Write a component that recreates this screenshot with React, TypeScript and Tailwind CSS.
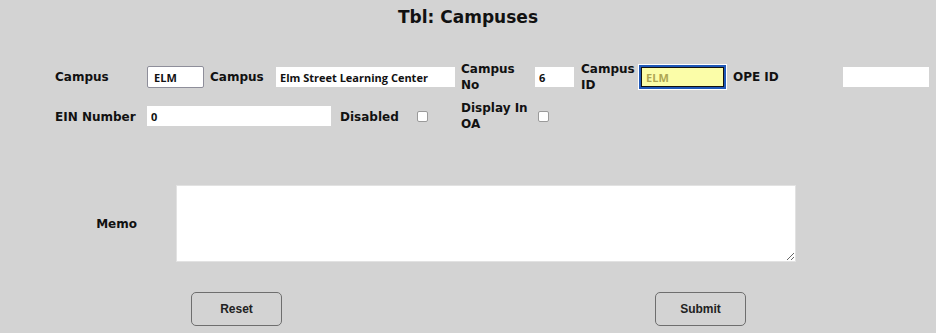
export default function App() {
  const label = "font-['DejaVu_Sans',sans-serif] text-[12px] font-bold leading-[16px] text-[#111]";
  const field =
    "h-[20px] bg-white px-[4px] font-['Open_Sans',sans-serif] text-[11px] font-bold text-[#111] outline-none";
  const box =
    "h-[11px] w-[11px] appearance-none rounded-[2px] border border-[#9a9a9a] bg-white";

  return (
    <div className="h-[333px] w-[936px] overflow-hidden bg-[#d3d3d3]">
      <h1 className="pt-[5px] text-center font-['DejaVu_Sans',sans-serif] text-[17px] font-bold leading-[24px] text-[#111]">
        Tbl: Campuses
      </h1>

      {/* Row 1 */}
      <div className="mt-[32px] flex h-[32px] items-center pl-[55px]">
        <span className={`${label} w-[92px]`}>Campus</span>
        <input
          readOnly
          value="ELM"
          className={`${field} h-[22px] w-[57px] rounded-[2px] border border-[#8e8e9a] px-[6px]`}
        />
        <span className={`${label} ml-[6px] w-[66px]`}>Campus</span>
        <input readOnly value="Elm Street Learning Center" className={`${field} w-[179px]`} />
        <span className={`${label} ml-[6px] w-[74px]`}>Campus No</span>
        <input readOnly value="6" className={`${field} w-[39px]`} />
        <span className={`${label} ml-[7px] w-[58px] self-start`}>Campus ID</span>
        <input
          readOnly
          value="ELM"
          className="h-[24px] w-[87px] border-2 border-[#1f58b8] bg-[#fbfda8] px-[5px] font-['Open_Sans',sans-serif] text-[11px] font-bold text-[#aea653] shadow-[0_0_0_1px_#fff,inset_0_0_0_1px_#111] outline-none"
        />
        <span className={`${label} ml-[7px] w-[110px]`}>OPE ID</span>
        <input readOnly value="" className={`${field} w-[86px]`} />
      </div>

      {/* Row 2 */}
      <div className="mt-[7px] flex h-[32px] items-center pl-[55px]">
        <span className={`${label} w-[92px] pt-[1px]`}>EIN Number</span>
        <input readOnly value="0" className={`${field} h-[19px] w-[184px]`} />
        <span className={`${label} ml-[9px] w-[77px] pt-[1px]`}>Disabled</span>
        <input type="checkbox" className={box} />
        <span className={`${label} ml-[33px] w-[77px]`}>Display In OA</span>
        <input type="checkbox" className={box} />
      </div>

      {/* Memo */}
      <div className="mt-[53px] flex items-center">
        <span className={`${label} w-[137px] text-right`}>Memo</span>
        <textarea className="ml-[39px] h-[77px] w-[620px] border border-[#e2e2e2] bg-white outline-none" />
      </div>

      {/* Buttons */}
      <div className="mt-[30px] flex">
        <button className="ml-[191px] h-[34px] w-[91px] rounded-[5px] border border-[#6e6e6e] font-['Liberation_Sans',sans-serif] text-[12px] font-bold text-[#222]">
          Reset
        </button>
        <button className="ml-[373px] h-[34px] w-[91px] rounded-[5px] border border-[#6e6e6e] font-['Liberation_Sans',sans-serif] text-[12px] font-bold text-[#222]">
          Submit
        </button>
      </div>
    </div>
  );
}
